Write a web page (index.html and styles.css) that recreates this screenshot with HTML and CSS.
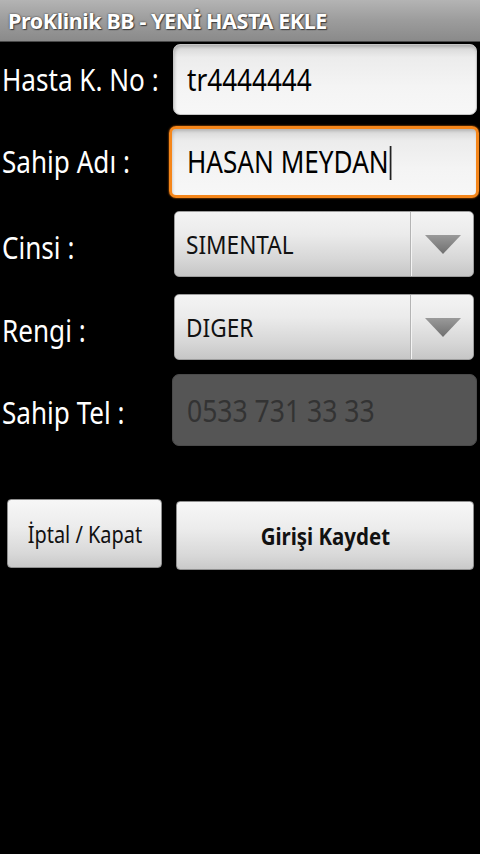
FILE: index.html
```html
<!DOCTYPE html>
<html lang="tr">
<head>
<meta charset="utf-8">
<title>ProKlinik BB - YENİ HASTA EKLE</title>
<link rel="stylesheet" href="styles.css">
</head>
<body>
<header class="titlebar"><span class="title">ProKlinik BB - YENİ HASTA EKLE</span></header>
<main class="form">
  <div class="row r1">
    <div class="label"><span class="sx">Hasta K. No :</span></div>
    <div class="field text"><span class="sx value">tr4444444</span></div>
  </div>
  <div class="row r2">
    <div class="label"><span class="sx">Sahip Adı :</span></div>
    <div class="field text focused"><span class="sx value">HASAN MEYDAN<span class="cursor"></span></span></div>
  </div>
  <div class="row r3 spin-row">
    <div class="label"><span class="sx">Cinsi :</span></div>
    <div class="field spinner">
      <span class="spin-text"><span class="sx">SIMENTAL</span></span>
      <span class="spin-arrow"><svg width="36" height="19" viewBox="0 0 36 19"><defs><linearGradient id="ag" x1="0" y1="0" x2="0" y2="1"><stop offset="0" stop-color="#9a9a9a"/><stop offset="1" stop-color="#6f6f6f"/></linearGradient></defs><polygon points="0,0 36,0 18,19" fill="url(#ag)"/></svg></span>
    </div>
  </div>
  <div class="row r4 spin-row">
    <div class="label"><span class="sx">Rengi :</span></div>
    <div class="field spinner">
      <span class="spin-text"><span class="sx">DIGER</span></span>
      <span class="spin-arrow"><svg width="36" height="19" viewBox="0 0 36 19"><defs><linearGradient id="ag2" x1="0" y1="0" x2="0" y2="1"><stop offset="0" stop-color="#9a9a9a"/><stop offset="1" stop-color="#6f6f6f"/></linearGradient></defs><polygon points="0,0 36,0 18,19" fill="url(#ag2)"/></svg></span>
    </div>
  </div>
  <div class="row r5">
    <div class="label"><span class="sx">Sahip Tel :</span></div>
    <div class="field text disabled"><span class="sx value">0533 731 33 33</span></div>
  </div>
  <div class="actions">
    <button class="btn cancel"><span class="sx">İptal / Kapat</span></button>
    <button class="btn save"><span class="sx">Girişi Kaydet</span></button>
  </div>
</main>
</body>
</html>
```
FILE: styles.css
```css
html, body {
  margin: 0;
  padding: 0;
  background: #000;
}
body {
  width: 480px;
  height: 854px;
  font-family: "Noto Sans", "Open Sans", "DejaVu Sans", sans-serif;
  color: #fff;
  overflow: hidden;
}
.sx {
  display: inline-block;
  transform: scaleX(0.87);
  transform-origin: left center;
  white-space: nowrap;
}
.titlebar {
  height: 41px;
  border-bottom: 1px solid #4a4a4a;
  background: linear-gradient(to bottom, #b4b4b4 0%, #9c9c9c 50%, #8a8a8a 100%);
  display: flex;
  align-items: center;
  padding-left: 8px;
  box-sizing: content-box;
}
.title {
  display: inline-block;
  font-size: 21.5px;
  font-weight: 700;
  color: #fff;
  text-shadow: 0 0 2px #333, 1px 1px 1px #444;
  letter-spacing: -0.4px;
  white-space: nowrap;
}
.form {
  display: flex;
  flex-direction: column;
}
.row {
  display: flex;
  align-items: center;
}
.label {
  flex: none;
  width: 166px;
  padding-left: 2px;
  font-size: 30px;
  line-height: 36px;
  color: #fff;
}
.spin-row .label {
  padding-top: 8px;
}
.r5 .label {
  padding-top: 6px;
}
.field {
  flex: 1;
  box-sizing: border-box;
  display: flex;
  align-items: center;
}
.text {
  background: linear-gradient(to bottom, #d4d4d4 0%, #ececec 18%, #f4f4f4 60%, #f7f7f7 100%);
  border: 1px solid #c6c6c6;
  border-radius: 7px;
  box-shadow: inset 1px 2px 3px rgba(0, 0, 0, 0.18);
  color: #000;
  font-size: 30px;
  padding-left: 13px;
}
.value {
  line-height: 36px;
}
.r1 {
  margin-top: 2px;
}
.r1 .field {
  height: 71px;
  margin-left: 5px;
  margin-right: 3px;
}
.r2 {
  margin-top: 11px;
}
.r2 .field {
  height: 72px;
  margin-left: 1px;
  margin-right: 1px;
}
.focused {
  border: 3px solid #f5861a;
  box-shadow: 0 0 2px #ff7a00, inset 1px 2px 3px rgba(0, 0, 0, 0.15);
  padding-left: 15px;
}
.cursor {
  display: inline-block;
  width: 2px;
  height: 34px;
  background: #222;
  vertical-align: -7px;
  margin-left: 1px;
}
.r3 {
  margin-top: 13px;
}
.r4 {
  margin-top: 17px;
}
.spinner {
  height: 66px;
  margin-left: 6px;
  margin-right: 6px;
  border: 1px solid #9d9d9d;
  border-radius: 5px;
  background: linear-gradient(to bottom, #f4f4f4 0%, #ebebeb 35%, #d6d6d6 75%, #c6c6c6 100%);
  color: #111;
  align-items: stretch;
}
.spin-text {
  flex: 1;
  display: flex;
  align-items: center;
  padding-left: 11px;
  font-size: 26px;
  border-right: 1px solid #b4b4b4;
  box-shadow: 1px 0 0 #f4f4f4;
}
.spin-arrow {
  width: 60px;
  flex: none;
  display: flex;
  align-items: center;
  justify-content: center;
  padding-left: 2px;
}
.r5 {
  margin-top: 14px;
}
.r5 .field {
  height: 72px;
  margin-left: 4px;
  margin-right: 3px;
}
.disabled {
  background: #555555;
  border: 1px solid #4a4a4a;
  box-shadow: none;
  color: #333333;
  font-size: 30.5px;
  padding-left: 14px;
}
.actions {
  display: flex;
  align-items: flex-start;
  margin-top: 53px;
  padding-left: 7px;
  gap: 14px;
}
.btn {
  box-sizing: border-box;
  height: 69px;
  border: 1px solid #8f8f8f;
  border-radius: 4px;
  background: linear-gradient(to bottom, #f7f7f7 0%, #ececec 40%, #d8d8d8 80%, #c9c9c9 100%);
  color: #111;
  font-family: "Noto Sans", "Open Sans", "DejaVu Sans", sans-serif;
  display: flex;
  align-items: center;
  justify-content: center;
  padding: 0;
}
.btn .sx {
  transform-origin: center center;
}
.cancel {
  width: 155px;
  font-size: 24px;
  font-weight: 400;
}
.cancel .sx {
  transform: scaleX(0.83);
}
.save {
  width: 298px;
  margin-top: 2px;
  font-size: 23.5px;
  font-weight: 700;
}
```
